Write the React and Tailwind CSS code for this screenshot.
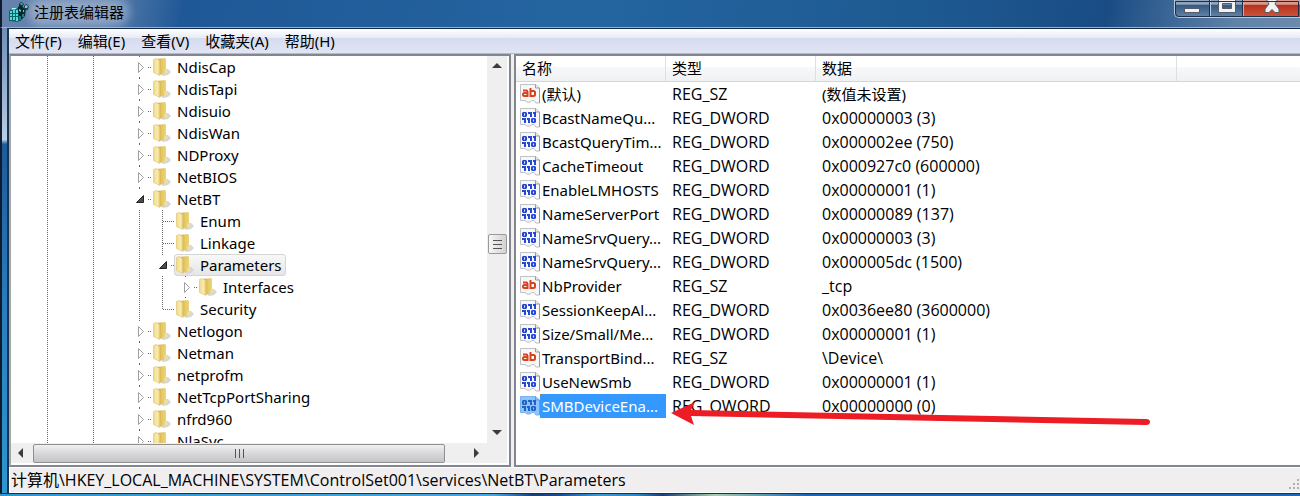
const UI_FONT = "font-['Noto_Sans','Noto_Sans_CJK_SC',sans-serif] text-[15px]";
const WIDE_FONT = "font-['Open_Sans','Noto_Sans_CJK_SC',sans-serif] text-base";

const menus = ['文件(F)', '编辑(E)', '查看(V)', '收藏夹(A)', '帮助(H)'];

// cells: 'l' guide line, ' ' blank, 'c' closed, 'o' open, 't' tee, 'e' elbow
const tree = [
  ['l l c', 'NdisCap'],
  ['l l c', 'NdisTapi'],
  ['l l c', 'Ndisuio'],
  ['l l c', 'NdisWan'],
  ['l l c', 'NDProxy'],
  ['l l c', 'NetBIOS'],
  ['l l o', 'NetBT'],
  ['l l lt', 'Enum'],
  ['l l lt', 'Linkage'],
  ['l l lo', 'Parameters'],
  ['l l llc', 'Interfaces'],
  ['l l le', 'Security'],
  ['l l c', 'Netlogon'],
  ['l l c', 'Netman'],
  ['l l c', 'netprofm'],
  ['l l c', 'NetTcpPortSharing'],
  ['l l c', 'nfrd960'],
  ['l l c', 'NlaSvc'],
];

const values = [
  ['(默认)', 'REG_SZ', '(数值未设置)'],
  ['BcastNameQu...', 'REG_DWORD', '0x00000003 (3)'],
  ['BcastQueryTim...', 'REG_DWORD', '0x000002ee (750)'],
  ['CacheTimeout', 'REG_DWORD', '0x000927c0 (600000)'],
  ['EnableLMHOSTS', 'REG_DWORD', '0x00000001 (1)'],
  ['NameServerPort', 'REG_DWORD', '0x00000089 (137)'],
  ['NameSrvQuery...', 'REG_DWORD', '0x00000003 (3)'],
  ['NameSrvQuery...', 'REG_DWORD', '0x000005dc (1500)'],
  ['NbProvider', 'REG_SZ', '_tcp'],
  ['SessionKeepAl...', 'REG_DWORD', '0x0036ee80 (3600000)'],
  ['Size/Small/Me...', 'REG_DWORD', '0x00000001 (1)'],
  ['TransportBind...', 'REG_SZ', '\\Device\\'],
  ['UseNewSmb', 'REG_DWORD', '0x00000001 (1)'],
  ['SMBDeviceEna...', 'REG_QWORD', '0x00000000 (0)'],
];

function RegeditIcon() {
  return (
    <svg width="20" height="20" viewBox="0 0 20 20" className="shrink-0" aria-hidden="true">
      <path d="M0 9l3-3h6l2 3v9l-2 2-9-1z" fill="#07666c" />
      <path d="M1 9h2v2H1zM4 8h2v3H4zM7 8h2v3H7zM1 12h2v2H1zM4 12h2v2H4zM7 12h2v2H7zM1 15h2v3H1zM4 15h2v3H4zM7 15h2v4H7z" fill="#4fdcd8" />
      <path d="M3 6h5l-2 1.500H2z" fill="#a9f5ef" />
      <path d="M9 5l3-2 3 3 2 1-1 7-5 5-1-1z" fill="#07242a" />
      <path d="M10 14h2v4h-2zM13 12h2v3h-2z" fill="#0d8288" />
      <path d="M10 2l2-2 3 2-2 3-3-1zM15 4l2-2 3 2-1 4-3 0z" fill="#07343a" />
      <path d="M11 2l1-1 2 1-1 1zM16 4l1-1 2 1-1 2h-2zM10 7l2 1v2l-2-1zM14 8h1v2h-1z" fill="#54d6d2" />
    </svg>
  );
}

function FolderIcon() {
  return (
    <svg width="20" height="20" viewBox="0 0 20 20" className="shrink-0" aria-hidden="true">
      <defs>
        <linearGradient id="folderFront" x1="0" x2="1">
          <stop offset="0" stopColor="#f0da88" />
          <stop offset=".6" stopColor="#f9ecae" />
          <stop offset="1" stopColor="#e6ca6e" />
        </linearGradient>
        <linearGradient id="folderBack" x1="0" x2="1">
          <stop offset="0" stopColor="#c19c42" />
          <stop offset=".5" stopColor="#e6c964" />
          <stop offset="1" stopColor="#eed67c" />
        </linearGradient>
      </defs>
      <path d="M12 12l4 0 3 3-3 3-5 1-2-2z" fill="#d3d6dd" />
      <path d="M5 2l8-1 1 1v10l1 4-8 2z" fill="url(#folderBack)" />
      <path d="M1.500 2.500L4 1.500l4 2v15l-6.500-3z" fill="url(#folderFront)" stroke="#dfc368" strokeWidth=".6" />
      <path d="M13 12l2 1 1 2-2 1.500-2 0z" fill="#f0dfa0" />
    </svg>
  );
}

function ValueIcon({ text, selected }) {
  const ink = text ? '#d8431f' : selected ? '#1f62c8' : '#2447d6';
  return (
    <svg width="20" height="20" viewBox="0 0 20 20" className="shrink-0" aria-hidden="true">
      <path
        d="M.5.500h15l4 3.500v15h-3.500l-2-2.500h-2l-2 1.500h-3l-2-1.500H.5z"
        fill={selected ? '#8fc3fb' : '#f8f8f8'}
        stroke={selected ? '#79b2f0' : '#c0c0c0'}
      />
      <path d="M15.500.500V4h4v15" fill="none" stroke={selected ? '#5b9be0' : '#979797'} />
      {text ? (
        <g fill="none" stroke={ink} strokeWidth="2">
          <path d="M3 6.500h3.200q1.300 0 1.300 1.200V13M7.500 9H4.500Q3 9 3 10.500T4.500 12h3" />
          <path d="M10.500 4v8h3q1.500 0 1.500-1.500V8.500Q15 7 13.500 7h-3" />
        </g>
      ) : (
        <g fill={ink}>
          <path d="M3 4h3l1 1v3l-1 1H3L2 8V5zM4 5.500v2h1v-2z" fillRule="evenodd" />
          <path d="M8 4h2v2H8zM10 4h2v5h-2zM14 4h2v5h-2zM13 4h1v2h-1z" />
          <path d="M2 10h2v2H2zM4 10h2v5H4zM8 10h2v5H8zM7 10h1v2H7z" />
          <path d="M12 10h3l1 1v3l-1 1h-3l-1-1v-3zM13 11.500v2h1v-2z" fillRule="evenodd" />
        </g>
      )}
    </svg>
  );
}

function Triangle({ dir }) {
  const turn = { up: 'M1 8l5-5 5 5z', down: 'M1 3h10L6 8z', left: 'M7 1v10L2 6z', right: 'M5 1v10l5-5z' };
  return (
    <svg width="12" height="12" viewBox="0 0 12 12" aria-hidden="true">
      <path d={turn[dir]} fill="#3c3c3c" />
    </svg>
  );
}

function TreeCell({ kind }) {
  if (kind === ' ') return <span className="w-[23px] shrink-0" />;
  return (
    <svg width="23" height="22" viewBox="0 0 23 22" className="shrink-0" aria-hidden="true">
      {kind === 'l' && <path d="M11.500 0v22" stroke="#666" strokeDasharray="1 1" />}
      {kind === 'c' && (
        <>
          <path d="M11.500 0v1M11.500 21v1M20 11.500h1M22 11.500h1" stroke="#666" />
          <path d="M10.500 6.500l5 5-5 5z" fill="#fff" stroke="#a0a0a0" />
        </>
      )}
      {kind === 'o' && (
        <>
          <path d="M11.500 0v1M20 11.500h1M22 11.500h1" stroke="#666" />
          <path d="M8.500 14.500h7v-7z" fill="#4c4c4c" stroke="#262626" />
        </>
      )}
      {(kind === 't' || kind === 'e') && (
        <path
          d={kind === 't' ? 'M11.500 0v22M12 11.500h11' : 'M11.500 0v12M12 11.500h11'}
          stroke="#666"
          strokeDasharray="1 1"
        />
      )}
    </svg>
  );
}

function TreePane() {
  return (
    <section className="flex w-[502px] shrink-0 flex-col border-2 border-[#82868f] border-l-[#a4a8ae] bg-white pr-0.5 pb-0.5">
      <div className="flex min-h-0 flex-1">
        <ul role="tree" aria-label="注册表项" className="min-h-0 flex-1 overflow-hidden pl-[25px]">
          {tree.map(([cells, name]) => {
            const selected = name === 'Parameters';
            return (
              <li key={name} role="treeitem" aria-selected={selected} className="flex h-[22px]">
                {cells.split('').map((kind, i) => (
                  <TreeCell key={i} kind={kind} />
                ))}
                <button
                  type="button"
                  className={`flex items-center gap-[5px] rounded-[3px] border pr-[3px] leading-5 ${
                    selected
                      ? 'border-[#d5d5d5] bg-linear-to-b from-[#f8f8f8] to-[#e6e6e6]'
                      : 'border-transparent'
                  }`}
                >
                  <FolderIcon />
                  <span>{name}</span>
                </button>
              </li>
            );
          })}
        </ul>
        <div className="flex w-5 shrink-0 flex-col items-center bg-[#efefef]">
          <button type="button" aria-label="向上滚动" className="flex h-5 items-center">
            <Triangle dir="up" />
          </button>
          <div className="grow-[47]" />
          <div className="flex h-5 w-[19px] flex-col items-center justify-center gap-[3px] rounded-[2px] border border-[#9a9a9a] bg-linear-to-r from-[#f6f6f6] to-[#d2d2d2]">
            <span className="h-px w-[9px] bg-[#555]" />
            <span className="h-px w-[9px] bg-[#555]" />
            <span className="h-px w-[9px] bg-[#555]" />
          </div>
          <div className="grow-[50]" />
          <button type="button" aria-label="向下滚动" className="flex h-5 items-center">
            <Triangle dir="down" />
          </button>
        </div>
      </div>
      <div className="flex h-5 shrink-0 items-center bg-[#efefef]">
        <button type="button" aria-label="向左滚动" className="flex w-[22px] justify-center">
          <Triangle dir="left" />
        </button>
        <div className="flex h-[19px] w-[412px] items-center justify-center gap-[3px] rounded-[2px] border border-[#8f8f8f] bg-linear-to-b from-[#f0f0f0] via-[#d8d8da] to-[#c4c4c8]">
          <span className="h-[9px] w-px bg-[#555]" />
          <span className="h-[9px] w-px bg-[#555]" />
          <span className="h-[9px] w-px bg-[#555]" />
        </div>
        <div className="flex-1" />
        <button type="button" aria-label="向右滚动" className="mr-[26px]">
          <Triangle dir="right" />
        </button>
      </div>
    </section>
  );
}

function ValuePane() {
  const head = 'border-r border-[#dedfe1] p-0 pl-1.5 text-left font-normal';
  return (
    <section className="relative min-w-0 flex-1 overflow-hidden border-y-2 border-l-2 border-[#82868f] bg-white">
      <table className="w-full table-fixed border-separate border-spacing-0">
        <colgroup>
          <col className="w-[150px]" />
          <col className="w-[150px]" />
          <col className="w-[361px]" />
          <col />
        </colgroup>
        <thead>
          <tr className="h-[26px] bg-linear-to-b from-white from-40% via-[#f7f8fa] via-45% to-[#f0f1f2] [&>th]:border-b [&>th]:border-b-[#d5d5d5]">
            <th className={head}>名称</th>
            <th className={head}>类型</th>
            <th className={head}>数据</th>
            <th className="p-0" />
          </tr>
        </thead>
        <tbody>
          {values.map(([name, type, data], i) => {
            const selected = type === 'REG_QWORD';
            return (
              <tr key={i} className="h-6">
                <td className="p-0 pl-1">
                  <div className="flex h-6 items-center whitespace-nowrap">
                    <ValueIcon text={type === 'REG_SZ'} selected={selected} />
                    <span
                      className={`pl-0.5 leading-6 ${
                        selected
                          ? 'flex-1 bg-[#3399ff] text-white outline-1 -outline-offset-1 outline-dotted outline-[#c8772c]'
                          : ''
                      }`}
                    >
                      {name}
                    </span>
                  </div>
                </td>
                <td className={`p-0 pl-1.5 leading-6 ${WIDE_FONT}`}>{type}</td>
                <td className={`p-0 pl-1.5 leading-6 ${i === 0 ? '' : WIDE_FONT}`}>{data}</td>
                <td className="p-0" />
              </tr>
            );
          })}
        </tbody>
      </table>
      <svg width="484" height="26" viewBox="0 0 484 26" className="absolute top-[345px] left-[155px]" aria-hidden="true">
        <path d="M0 12L24 1l-4 8 455 9q4 0 4 3t-4 3L20 15l3 9z" fill="#ee1c25" />
      </svg>
    </section>
  );
}

function CaptionButtons() {
  const glass = 'flex items-start justify-center bg-linear-to-b from-[#8fa5bd] from-25% via-[#34587f] via-30% to-[#6385a8]';
  return (
    <div className="flex h-[18px] w-[126px] shrink-0 overflow-hidden rounded-bl-[5px] border-b border-l border-[#b6cbe0] outline-1 -outline-offset-2 outline-[#1c2f48]">
      <button type="button" aria-label="最小化" className={`w-[35px] border-r border-[#1d3048] ${glass}`}>
        <svg width="18" height="14" viewBox="0 0 18 14"><rect x="1.500" y="8.500" width="15" height="4" fill="#f2f2f2" stroke="#555b68" /></svg>
      </button>
      <button type="button" aria-label="最大化" className={`w-[33px] border-r border-l border-r-[#1d3048] border-l-[#b6cbe0] ${glass}`}>
        <svg width="18" height="14" viewBox="0 0 18 14"><path d="M.5-4h17v16.500H.5zM4.500 3.500v5h9v-5z" fillRule="evenodd" fill="#f2f2f2" stroke="#555b68" /></svg>
      </button>
      <button type="button" aria-label="关闭" className="flex flex-1 justify-center border-l border-[#e2a49a] bg-linear-to-b from-[#d79a90] from-25% via-[#b5301f] via-30% to-[#d0543a]">
        <svg width="18" height="14" viewBox="0 0 18 14"><path d="M2-3h5l2 3 2-3h5l-4 7 4 5v3.500h-4l-3-3-3 3H2V9l4-5z" fill="#f2f2f2" stroke="#555b68" /></svg>
      </button>
    </div>
  );
}

export default function App() {
  return (
    <div className={`flex h-screen flex-col overflow-hidden text-black ${UI_FONT}`}>
      <header className="flex h-7 shrink-0 items-start justify-between border-b border-l-2 border-b-[#8fb4d8] border-l-[#101c2c] bg-[linear-gradient(100deg,#6683ac_0%,#5b7eac_8%,#1f5896_14%,#2465a0_45%,#1e5a92_70%,#1a4c84_85%,#5f82a8_95%,#6b8bad_100%)]">
        <div className="flex h-6 items-center pl-[7px]">
          <RegeditIcon />
          <h1 className="ml-[5px] rounded-full bg-white/30 leading-4 shadow-[0_0_8px_6px_rgba(255,255,255,0.3)]">注册表编辑器</h1>
        </div>
        <CaptionButtons />
      </header>
      <div className="flex min-h-0 flex-1">
        <div className="w-[9px] shrink-0 border-r-2 border-l-2 border-r-[#17344f] border-l-[#101c2c] bg-[linear-gradient(#6f8db5,#b9cde4_24%,#1c5a9c_25%,#2a7dbd_60%,#2e96cf)]" />
        <div className="flex min-w-0 flex-1 flex-col bg-[#f0eeee]">
          <nav className="flex h-[26px] shrink-0 items-center gap-4 border-t border-b border-t-[#14284a] border-b-[#b4b9cc] bg-[linear-gradient(#ffffff,#e6ebf4_36%,#d5dbee_37%,#e1e5f5)] pl-1.5">
            {menus.map((m) => (
              <button key={m} type="button" className="leading-5">{m}</button>
            ))}
          </nav>
          <main className="flex min-h-0 flex-1 gap-[3px]">
            <TreePane />
            <ValuePane />
          </main>
          <footer className={`flex h-[26px] shrink-0 items-center justify-between border-y border-l border-white pl-px ${WIDE_FONT}`}>
            <span>计算机\HKEY_LOCAL_MACHINE\SYSTEM\ControlSet001\services\NetBT\Parameters</span>
            <svg width="12" height="12" viewBox="0 0 12 12" className="mt-2" fill="#b3b0b0" aria-hidden="true">
              <path d="M9 1h2v2H9zM5 5h2v2H5zM9 5h2v2H9zM1 9h2v2H1zM5 9h2v2H5zM9 9h2v2H9z" />
            </svg>
          </footer>
        </div>
      </div>
      <div className="h-[3px] shrink-0 border-t border-[#17344f] bg-[linear-gradient(90deg,#2e96cf,#4aa6dc_38%,#1a3f78_41%,#1a4c90_43%,#3c98d4_46%,#2f86c4_49%,#1a3f78_51%,#a5cfb0_55%,#1f68b4_62%,#1f68b4)]" />
    </div>
  );
}
